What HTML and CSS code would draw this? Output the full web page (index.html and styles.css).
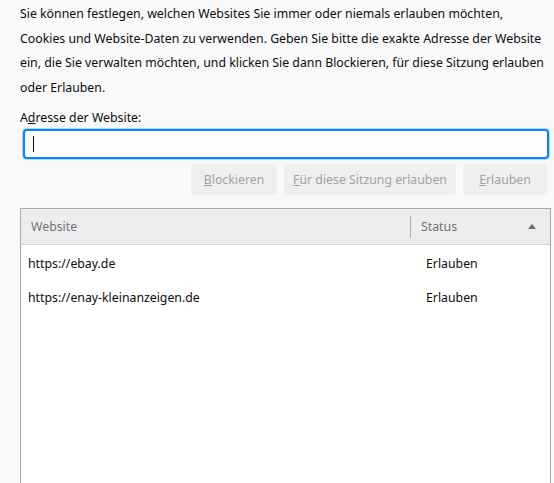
FILE: index.html
```html
<!DOCTYPE html>
<html lang="de">
<head>
<meta charset="utf-8">
<title>Ausnahmen - Cookies und Website-Daten</title>
<link rel="stylesheet" href="styles.css">
</head>
<body>
<div class="dialog">
  <p class="intro">Sie können festlegen, welchen Websites Sie immer oder niemals erlauben möchten,<br>Cookies und Website-Daten zu verwenden. Geben Sie bitte die exakte Adresse der Website<br>ein, die Sie verwalten möchten, und klicken Sie dann Blockieren, für diese Sitzung erlauben<br>oder Erlauben.</p>
  <div class="label">A<u>d</u>resse der Website:</div>
  <div class="input"><span class="caret"></span></div>
  <div class="buttons">
    <div class="btn btn-block"><u>B</u>lockieren</div>
    <div class="btn btn-session"><u>F</u>ür diese Sitzung erlauben</div>
    <div class="btn btn-allow"><u>E</u>rlauben</div>
  </div>
  <div class="table">
    <div class="thead">
      <div class="th th-site">Website</div>
      <div class="th th-status">Status<span class="sort"></span></div>
    </div>
    <div class="tbody">
      <div class="row"><div class="td td-site">https://ebay.de</div><div class="td td-status">Erlauben</div></div>
      <div class="row"><div class="td td-site">https://enay-kleinanzeigen.de</div><div class="td td-status">Erlauben</div></div>
    </div>
  </div>
</div>
</body>
</html>
```

FILE: styles.css
```css
html, body {
  margin: 0;
  padding: 0;
  background: #f9f9fa;
  height: 100%;
  overflow: hidden;
}
body {
  font-family: "Noto Sans", "Open Sans", sans-serif;
  font-size: 12.3px;
  color: #0c0c0d;
}
.dialog {
  padding: 2px 3px 0 20px;
}
.intro {
  margin: 0;
  line-height: 24.5px;
  white-space: nowrap;
}
.label {
  margin-top: 9px;
  line-height: 18px;
}
.label u { text-decoration-thickness: 1px; }
.input {
  margin: 2px 0 0 3px;
  width: 526px;
  height: 30px;
  box-sizing: border-box;
  border: 2px solid #0a84ff;
  border-radius: 4px;
  box-shadow: 0 0 0 1px #a9d3ff;
  background: #fff;
  display: flex;
  align-items: center;
  padding-left: 8px;
}
.caret {
  width: 1px;
  height: 16px;
  background: #0c0c0d;
}
.buttons {
  display: flex;
  justify-content: flex-end;
  gap: 7px;
  margin-top: 5px;
  width: 527px;
}
.btn {
  height: 31px;
  line-height: 31px;
  text-align: center;
  background: #efeff1;
  border-radius: 2px;
  color: #a3a3a5;
  box-sizing: border-box;
}
.btn-block { width: 86px; }
.btn-session { width: 172px; }
.btn-allow { width: 84px; }
.btn u { text-decoration-thickness: 1px; }
.table {
  margin-top: 13px;
  width: 531px;
  height: 400px;
  box-sizing: border-box;
  border: 1px solid #a9a9ab;
  background: #fff;
}
.thead {
  display: flex;
  height: 35px;
  background: #ededf0;
  border-bottom: 1px solid #d2d2d4;
  color: #737373;
}
.th {
  display: flex;
  align-items: center;
}
.th-site {
  width: 390px;
  padding-left: 10px;
  box-sizing: border-box;
  border-right: 1px solid #aeaeb0;
  height: 22px;
  align-self: center;
}
.th-status {
  flex: 1;
  padding-left: 10px;
  position: relative;
}
.sort {
  position: absolute;
  right: 14px;
  top: 15px;
  width: 0;
  height: 0;
  border-left: 4px solid transparent;
  border-right: 4px solid transparent;
  border-bottom: 5px solid #6e6e70;
}
.tbody {
  padding-top: 1px;
}
.row {
  display: flex;
  height: 34px;
  align-items: center;
}
.td-site {
  width: 398px;
  padding-left: 7px;
  box-sizing: border-box;
}
.td-status {
  flex: 1;
  padding-left: 7px;
}
```
